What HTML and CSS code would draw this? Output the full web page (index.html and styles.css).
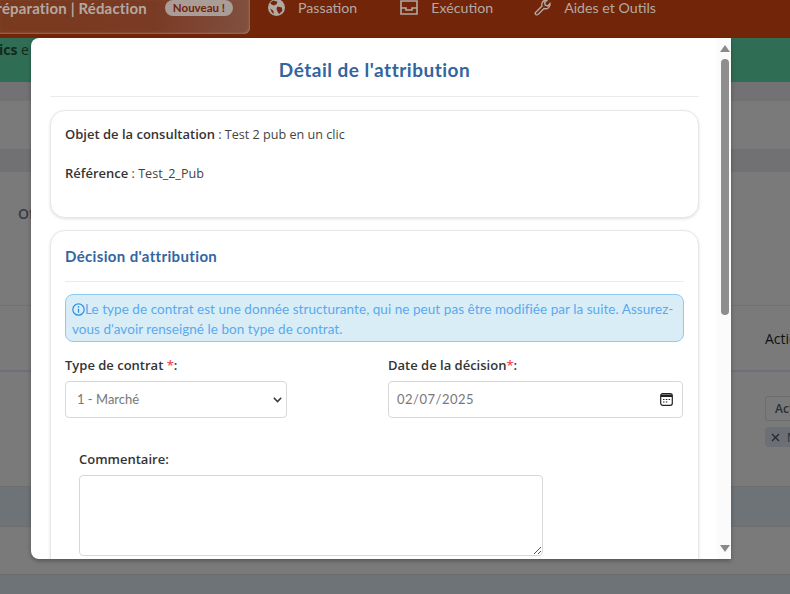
FILE: index.html
```html
<!DOCTYPE html>
<html lang="fr">
<head>
<meta charset="utf-8">
<title>Détail de l'attribution</title>
<link rel="stylesheet" href="styles.css">
</head>
<body>
<div class="page">
  <header class="topbar">
    <div class="tab-active"><span class="tab-title">réparation | Rédaction</span><span class="badge">Nouveau !</span></div>
    <nav class="nav">
      <span class="nav-item nav-pass"><svg class="nav-icon" width="17" height="17" viewBox="0 0 16 16"><circle cx="8" cy="8" r="8" fill="#b2a9a3"/><path d="M5 1.500 9 2.500 8 5 5.500 6 3 5 2 3.500ZM9 7l4 1 .5 3-3 3-1.500-2-1-3ZM2 9l3 2 .5 3-2-1.500Z" fill="#732509"/></svg>Passation</span>
      <span class="nav-item nav-exec"><svg class="nav-icon" width="18" height="15" viewBox="0 0 18 15"><path d="M1 1h16v13H1ZM1 8h5v2h6V8h5" fill="none" stroke="#b2a9a3" stroke-width="1.600"/></svg>Exécution</span>
      <span class="nav-item nav-help"><svg class="nav-icon" width="17" height="17" viewBox="0 0 17 17"><path d="M1.500 13.500 8 7c-.8-2.500.5-5.500 4-6l1 .2-2.500 2.500.8 2.500 2.500.8L16 4.500c.5 3.500-2.500 6-6 5l-6 6c-1.500 1-3.500-.5-2.500-2Z" fill="none" stroke="#b2a9a3" stroke-width="1.400"/></svg>Aides et Outils</span>
    </nav>
  </header>
  <div class="greenbar"><b>ics</b> e</div>
  <div class="band band-a"></div>
  <div class="band band-b"></div>
  <div class="band band-c"></div>
  <div class="band band-d"><span class="of">Of</span></div>
  <div class="band band-e"><span class="actions">Actions</span></div>
  <div class="band band-f"><div class="side"><span class="chip-btn">Actions</span><span class="chip"><svg class="chip-x" width="9" height="9" viewBox="0 0 9 9"><path d="M1 1l7 7M8 1 1 8" stroke="#23272e" stroke-width="1.200"/></svg>M</span></div></div>
  <div class="band band-g"></div>
  <div class="band band-h"></div>
  <div class="band band-i"></div>
</div>

<section class="modal">
  <div class="modal-scroll">
    <h1 class="modal-title">Détail de l'attribution</h1>
    <div class="card card-info">
      <p class="line"><strong>Objet de la consultation</strong> : Test 2 pub en un clic</p>
      <p class="line"><strong>Référence</strong> : Test_2_Pub</p>
    </div>
    <div class="card card-form">
      <h2 class="card-title">Décision d'attribution</h2>
      <div class="alert"><svg class="alert-icon" width="13" height="13" viewBox="0 0 16 16"><circle cx="8" cy="8" r="7" fill="none" stroke="#2f8fe0" stroke-width="1.500"/><circle cx="8" cy="4.800" r="1" fill="#2f8fe0"/><path d="M8 7v5" stroke="#2f8fe0" stroke-width="1.600"/></svg>Le type de contrat est une donnée structurante, qui ne peut pas être modifiée par la suite. Assurez-vous d'avoir renseigné le bon type de contrat.</div>
      <div class="row">
        <div class="field field-type">
          <label class="label">Type de contrat <span class="req">*</span>:</label>
          <div class="control"><span class="control-text">1 - Marché</span><svg width="9" height="6" viewBox="0 0 9 6"><path d="M.8.8 4.500 4.500 8.200.8" fill="none" stroke="#343a40" stroke-width="1.600"/></svg></div>
        </div>
        <div class="field field-date">
          <label class="label">Date de la décision<span class="req">*</span>:</label>
          <div class="control control-date"><span class="control-text">02/07/2025</span><svg width="13" height="13" viewBox="0 0 13 13"><rect x=".7" y=".7" width="11.600" height="11.600" rx="2" fill="none" stroke="#222" stroke-width="1.200"/><path d="M1 1.500h11V4H1Z" fill="#222"/><path d="M3 6.500h1.500M5.800 6.500h1.500M8.600 6.500h1.500M3 9h1.500M5.800 9h1.500" stroke="#222" stroke-width="1.200"/></svg></div>
        </div>
      </div>
      <div class="comment">
        <label class="label">Commentaire:</label>
        <div class="textarea"><svg class="grip" width="9" height="9" viewBox="0 0 9 9"><path d="M1 8 8 1M5 8l3-3" stroke="#555" stroke-width="1"/></svg></div>
      </div>
    </div>
  </div>
  <div class="scrollbar">
    <span class="arrow-up"></span>
    <span class="thumb"></span>
    <span class="arrow-down"></span>
  </div>
</section>
</body>
</html>
```
FILE: styles.css
```css
* { box-sizing: border-box; }
html, body { margin: 0; height: 100%; overflow: hidden; }
body { font-family: "Open Sans", sans-serif; background: #7a7a7a; width: 790px; height: 594px; position: relative; }

.page { display: flex; flex-direction: column; height: 594px; overflow: hidden; }
.topbar { height: 38px; background: #732509; display: flex; align-items: flex-start; flex: none; color: #b2a9a3; font-family: Lato, sans-serif; font-size: 14.200px; }
.tab-active { width: 250px; height: 34px; flex: none; background: linear-gradient(90deg, #7a3a1f, #7a3a24 60%, #80503f); border-radius: 0 0 6px 0; box-shadow: inset -1px -1px 2px #96705f; display: flex; align-items: center; justify-content: flex-end; padding: 0 17px 18px 0; }
.tab-title { font-weight: 700; font-size: 15px; margin-right: 18px; white-space: nowrap; letter-spacing: .15px; }
.badge { background: #aa9c96; color: #6f2409; border-radius: 10px; font-size: 11.500px; font-weight: 700; padding: 1px 8px; height: 16px; line-height: 14px; white-space: nowrap; }
.nav { display: flex; align-items: center; height: 14px; }
.nav-item { display: flex; align-items: center; white-space: nowrap; }
.nav-icon { margin-right: 13px; flex: none; }
.nav-pass { margin-left: 18px; }
.nav-exec { margin-left: 43px; }
.nav-help { margin-left: 41px; }

.greenbar { height: 44px; flex: none; background: #2f6e55; color: #13291f; font-size: 14px; line-height: 24px; white-space: nowrap; margin-left: -1px; }
.greenbar b { font-weight: 700; }
.band { flex: none; position: relative; }
.band-a { height: 19px; background: #727274; }
.band-b { height: 48px; background: #7a7a7a; }
.band-c { height: 23px; background: #717173; }
.band-d { height: 134px; background: #7a7a7a; border-bottom: 1px solid #717171; }
.band-e { height: 66px; background: #7a7a7a; border-bottom: 2px solid #6d7177; }
.band-f { height: 115px; background: #7a7a7a; border-bottom: 1px solid #6e6e6e; }
.band-g { height: 40px; background: #6e7378; border-bottom: 1px solid #6e6e6e; }
.band-h { height: 48px; background: #7a7a7a; border-bottom: 1px solid #6b6b6b; }
.band-i { flex: 1; background: #6e7378; }
.of { position: absolute; left: 18px; top: 32px; font-size: 14px; font-weight: 600; color: #353a4a; }
.actions { position: absolute; left: 765px; top: 23px; font-size: 14px; color: #111; }
.side { position: absolute; left: 765px; top: 24px; display: flex; flex-direction: column; gap: 6px; font-size: 12px; color: #2a2e36; white-space: nowrap; }
.chip-btn { border: 1px solid #6c6c6c; border-radius: 3px; width: 60px; height: 25px; padding: 3px 9px; font-weight: 600; }
.chip { background: #6c6f74; border-radius: 4px; width: 60px; height: 20px; padding: 0 6px; display: flex; align-items: center; gap: 7px; }
.chip-x { flex: none; }

.modal { position: absolute; left: 31px; top: 38px; width: 700px; height: 521px; background: #fff; border-radius: 8px 0 0 8px; box-shadow: 0 2px 4px rgba(0,0,0,.3); display: flex; overflow: hidden; }
.modal-scroll { width: 686px; flex: none; padding: 0 0 0 19px; height: 521px; overflow: hidden; }
.modal-title { margin: 0 0 13px; width: 649px; height: 59px; border-bottom: 1px solid #e9ecef; color: #33659f; font: 700 19px/63px Lato, sans-serif; text-align: center; letter-spacing: .5px; }
.card { width: 649px; background: #fff; border: 1px solid #e7e7e7; border-radius: 15px; box-shadow: 0 1px 3px rgba(0,0,0,.13); padding: 0 14px; }
.card-info { height: 108px; margin-bottom: 12px; padding-top: 14px; }
.line { margin: 0 0 20px; font-size: 12.600px; line-height: 19px; color: #444; }
.line strong { font-weight: 600; font-size: 13px; color: #343434; }
.card-form { height: 400px; }
.card-title { margin: 0 0 12px; height: 51px; border-bottom: 1px solid #e9ecef; color: #33659f; font: 700 15px/50px Lato, sans-serif; letter-spacing: .35px; }
.alert { height: 48px; background: #d9edf7; border: 1px solid #8fcaf5; border-radius: 8px; padding: 4px 6px; color: #5aa9ee; font: 13.500px/20px Lato, sans-serif; letter-spacing: .05px; }
.alert-icon { vertical-align: -2px; }
.row { display: flex; margin-top: 14px; }
.field-type { width: 222px; }
.field-date { width: 295px; margin-left: 101px; }
.label { display: block; font-size: 13px; font-weight: 600; line-height: 19px; color: #343434; margin-bottom: 6px; }
.req { color: #ef4f62; }
.control { height: 37px; border: 1px solid #d8d8d8; border-radius: 4px; display: flex; align-items: center; justify-content: space-between; padding: 0 4px 0 11px; color: #777; font: 13px Lato, sans-serif; }
.control-text { margin-bottom: 2px; }
.control-date { padding: 0 9px 0 8px; letter-spacing: .5px; }
.comment { margin: 32px 0 0 14px; }
.textarea { width: 464px; height: 81px; border: 1px solid #d8d8d8; border-radius: 4px; position: relative; }
.grip { position: absolute; right: 0; bottom: 0; }

.scrollbar { width: 14px; flex: none; background: #fbfbfb; position: relative; }
.arrow-up, .arrow-down, .thumb { position: absolute; }
.arrow-up { left: 3px; top: 7px; border: 5px solid transparent; border-top: 0; border-bottom: 7px solid #8a8a8a; }
.arrow-down { left: 3px; top: 507px; border: 5px solid transparent; border-bottom: 0; border-top: 7px solid #8a8a8a; }
.thumb { left: 4px; top: 21px; width: 8px; height: 256px; background: #8e8e8e; border-radius: 4px; }
```
